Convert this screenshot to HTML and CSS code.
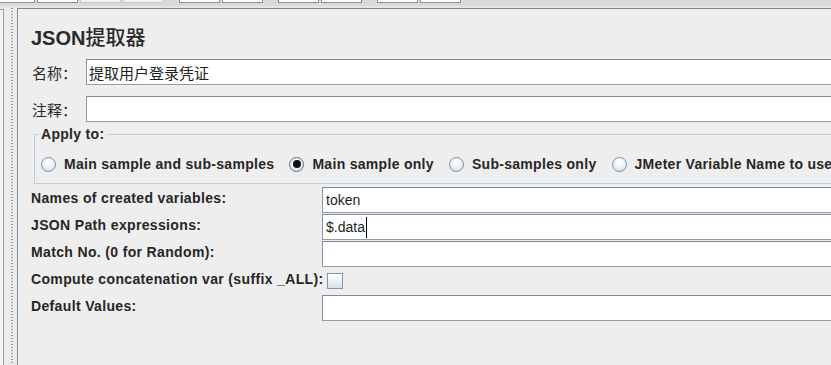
FILE: index.html
```html
<!DOCTYPE html>
<html lang="zh">
<head>
<meta charset="utf-8">
<title>JSON提取器</title>
<link rel="stylesheet" href="styles.css">
</head>
<body>
<div class="toolbar">
  <div class="tbtn first"></div><div class="tbtn"></div><div class="tbtn dis"></div><div class="tbtn dis"></div>
  <div class="tsep"></div>
  <div class="tbtn"></div><div class="tbtn"></div>
  <div class="tsep"></div>
  <div class="tbtn"></div><div class="tbtn"></div>
  <div class="tsep"></div>
  <div class="tbtn"></div><div class="tbtn"></div>
</div>
<div class="main">
  <div class="gutter">
    <div class="tree-edge"></div>
    <div class="splitter"><div class="dots"></div></div>
  </div>
  <div class="panel">
    <div class="title">JSON<span class="cjk">提取器</span></div>
    <div class="row">
      <label class="row-label">名称：</label>
      <div class="field cjk-field">提取用户登录凭证</div>
    </div>
    <div class="row gap">
      <label class="row-label">注释：</label>
      <div class="field"></div>
    </div>
    <fieldset class="group">
      <legend>Apply to:</legend>
      <div class="radios">
        <span class="radio"></span><span class="rlabel">Main sample and sub-samples</span>
        <span class="radio on"></span><span class="rlabel">Main sample only</span>
        <span class="radio"></span><span class="rlabel">Sub-samples only</span>
        <span class="radio"></span><span class="rlabel">JMeter Variable Name to use</span>
      </div>
    </fieldset>
    <div class="form">
      <div class="flabel">Names of created variables:</div>
      <div class="field">token</div>
      <div class="flabel">JSON Path expressions:</div>
      <div class="field"><span>$.data</span><span class="caret"></span></div>
      <div class="flabel">Match No. (0 for Random):</div>
      <div class="field"></div>
      <div class="flabel">Compute concatenation var (suffix _ALL):</div>
      <div class="checkcell"><span class="check"></span></div>
      <div class="flabel">Default Values:</div>
      <div class="field"></div>
    </div>
  </div>
</div>
</body>
</html>
```
FILE: styles.css
```css
html, body {
  margin: 0;
  padding: 0;
}
body {
  width: 831px;
  height: 365px;
  overflow: hidden;
  background: #eeeeee;
  font-family: "Liberation Sans", "Noto Sans CJK SC", sans-serif;
  color: #262626;
}
.toolbar {
  height: 6px;
  background: #d9d9d9;
  border-bottom: 2px solid #e6e6e6;
  display: flex;
  align-items: flex-start;
  overflow: hidden;
}
.tbtn {
  width: 39px;
  height: 2px;
  margin-right: 2px;
  background: #fbfbfb;
  border: 1px solid #8e8e8e;
  border-top: none;
  flex: none;
}
.tbtn.first {
  width: 34px;
  margin-left: -1px;
}
.tbtn.dis {
  border-color: #c9c9c9;
  background: #f1f1f1;
}
.tsep {
  width: 13px;
  flex: none;
}
.main {
  display: flex;
  height: 357px;
}
.gutter {
  width: 17px;
  flex: none;
  display: flex;
  background: #ececec;
}
.tree-edge {
  width: 3px;
  margin-top: 1px;
  border-top: 1px solid #9a9a9a;
  border-right: 1px solid #9a9a9a;
  background: #f4f4f4;
  flex: none;
}
.splitter {
  flex: 1;
  padding-left: 7px;
}
.dots {
  width: 2px;
  height: 100%;
  background: repeating-linear-gradient(to bottom, #8f9eae 0 1px, transparent 1px 3px);
}
.panel {
  flex: 1;
  border-top: 1px solid #6f8aa1;
  border-left: 1px solid #7d8fa0;
  padding: 16px 0 0 13px;
  min-width: 0;
}
.title {
  font-size: 20px;
  font-weight: bold;
  line-height: 24px;
  height: 24px;
  margin-bottom: 10px;
  color: #2a2a2a;
}
.title .cjk {
  font-family: "Noto Sans CJK SC", sans-serif;
  font-weight: 500;
}
.row {
  display: flex;
  align-items: center;
  height: 26px;
}
.row.gap {
  margin-top: 11px;
}
.row-label {
  width: 54px;
  padding-left: 1px;
  flex: none;
  font-family: "Noto Sans CJK SC", sans-serif;
  font-size: 15px;
  color: #2a2a2a;
}
.field {
  box-sizing: border-box;
  height: 26px;
  background: #ffffff;
  border-top: 1px solid #7a8c9d;
  border-left: 1px solid #8696a6;
  border-bottom: 1px solid #8e9cab;
  margin-right: -30px;
  flex: 1;
  display: flex;
  align-items: center;
  padding-left: 3px;
  font-size: 14px;
  color: #1e1e1e;
  white-space: nowrap;
}
.cjk-field {
  font-family: "Noto Sans CJK SC", sans-serif;
  font-size: 15px;
  padding-left: 2px;
}
.caret {
  width: 1px;
  height: 21px;
  background: #000;
  margin-left: 1px;
}
.group {
  margin: 4px -40px 0 3px;
  padding: 0 0 9px 4px;
  border: 1px solid #b8cfe5;
  min-width: 0;
}
.group legend {
  padding: 0 3px 0 2px;
  font-size: 14px;
  font-weight: bold;
  letter-spacing: 0.3px;
  line-height: 16px;
  color: #262626;
}
.radios {
  display: flex;
  align-items: center;
  height: 20px;
  margin-top: 12px;
  padding-left: 2px;
  white-space: nowrap;
}
.radio {
  box-sizing: border-box;
  width: 15px;
  height: 15px;
  flex: none;
  border-radius: 50%;
  border: 1px solid #7b91a8;
  background: radial-gradient(circle at 50% 35%, #ffffff 0%, #eef3f8 45%, #cad6e3 100%);
  position: relative;
  margin-right: 8px;
}
.radio.on {
  border-color: #5f6f80;
}
.radio.on::after {
  content: "";
  position: absolute;
  left: 2.5px;
  top: 2.5px;
  width: 8px;
  height: 8px;
  border-radius: 50%;
  background: #111;
}
.rlabel {
  font-size: 14px;
  font-weight: bold;
  letter-spacing: 0.3px;
  margin-right: 15px;
  color: #262626;
}
.form {
  margin-top: 3px;
  display: grid;
  grid-template-columns: 291px 1fr;
  grid-auto-rows: 26px;
  row-gap: 1px;
  align-items: center;
}
.form .field {
  margin-right: -30px;
}
.flabel {
  font-size: 14px;
  font-weight: bold;
  letter-spacing: 0.35px;
  padding-bottom: 4px;
  white-space: nowrap;
  color: #262626;
}
.checkcell {
  display: flex;
  align-items: center;
  height: 26px;
  padding-left: 5px;
}
.check {
  box-sizing: border-box;
  width: 16px;
  height: 16px;
  border: 1px solid #8297ad;
  background: linear-gradient(#ffffff, #d6e0eb);
}
```
